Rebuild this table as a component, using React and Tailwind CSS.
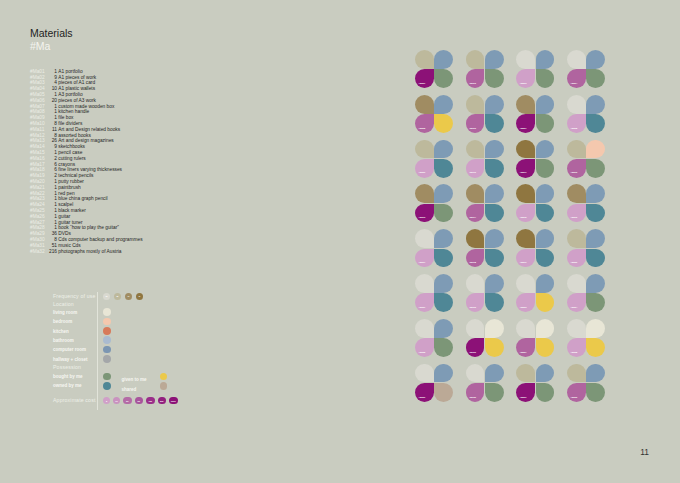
import React from "react";

const C = {
  p: "bg-[#d9d9d0]",
  k: "bg-[#bdb99c]",
  d: "bg-[#a08c62]",
  n: "bg-[#8f7640]",
  b: "bg-[#7e9bb5]",
  h: "bg-[#f4c8ae]",
  w: "bg-[#e8e6d6]",
  M: "bg-[#8c1177]",
  m: "bg-[#b0649f]",
  l: "bg-[#d0a0c8]",
  g: "bg-[#7c9677]",
  t: "bg-[#4f8796]",
  y: "bg-[#ebc94a]",
  u: "bg-[#bba996]",
};

const flowers = [
  "kbMg", "kbmg", "pblg", "pbmg",
  "dbmy", "kbmt", "dbMg", "pblt",
  "kblt", "kblt", "nbMg", "khmg",
  "dbMg", "dbmt", "nblt", "dblt",
  "pblt", "nbmt", "nblt", "kblt",
  "pblt", "pblt", "pbly", "pblg",
  "pblg", "pwMy", "pwmy", "pwly",
  "pbMu", "pbmg", "kbMg", "kbmg",
];

const items = [
  ["1", "A1 portfolio"],
  ["9", "A1 pieces of work"],
  ["4", "pieces of A1 card"],
  ["10", "A1 plastic wallets"],
  ["1", "A3 portfolio"],
  ["20", "pieces of A3 work"],
  ["1", "custom made wooden box"],
  ["1", "kitchen handle"],
  ["1", "file box"],
  ["8", "file dividers"],
  ["11", "Art and Design related books"],
  ["8", "assorted books"],
  ["26", "Art and design magazines"],
  ["9", "sketchbooks"],
  ["1", "pencil case"],
  ["2", "cutting rulers"],
  ["6", "crayons"],
  ["6", "fine liners varying thicknesses"],
  ["2", "technical pencils"],
  ["1", "putty rubber"],
  ["1", "paintbrush"],
  ["1", "red pen"],
  ["1", "blue china graph pencil"],
  ["1", "scalpel"],
  ["1", "black marker"],
  ["1", "guitar"],
  ["1", "guitar tuner"],
  ["1", "book \u201chow to play the guitar\u201d"],
  ["36", "DVDs"],
  ["8", "Cds computer backup and programmes"],
  ["51", "music Cds"],
  ["216", "photographs mostly of Austria"],
];

const id = (i) => `#Ma${String(i + 1).padStart(2, "0")}`;

function Flower({ code, label }) {
  const [tl, tr, bl, br] = code.split("");
  return (
    <div className="grid grid-cols-[18.7px_18.7px] grid-rows-[18.7px_18.7px] gap-[0.6px]">
      <div className={`rounded-full rounded-br-none ${C[tl]}`} />
      <div className={`rounded-full rounded-bl-none ${C[tr]}`} />
      <div className={`rounded-full rounded-tr-none flex items-end pl-[3.5px] pb-[4px] ${C[bl]}`}>
        <span className="text-[2.2px] leading-none font-bold text-white">{label}</span>
      </div>
      <div className={`rounded-full rounded-tl-none ${C[br]}`} />
    </div>
  );
}

function Dot({ color, text, wide }) {
  return (
    <div
      className={`${wide ? "w-[8.5px]" : "w-[7px]"} h-[7px] rounded-full flex items-center justify-center ${color}`}
    >
      {text && <span className="text-[2.2px] leading-none font-bold text-white">{text}</span>}
    </div>
  );
}

const Label = ({ children }) => (
  <span className="text-[4.5px] leading-none font-bold whitespace-nowrap text-[#f7f7f2]">{children}</span>
);
const Head = ({ children }) => (
  <span className="text-[5.2px] leading-none tracking-[0.15px] whitespace-nowrap text-[#eef0e8]">{children}</span>
);

export default function App() {
  const locations = [
    ["living room", "bg-[#e8e6d6]"],
    ["bedroom", "bg-[#f4c8ae]"],
    ["kitchen", "bg-[#d77a5a]"],
    ["bathroom", "bg-[#aabbd0]"],
    ["computer room", "bg-[#7b96b2]"],
    ["hallway + closet", "bg-[#a4a7a9]"],
  ];

  return (
    <div className="w-[680px] h-[483px] bg-[#c9ccc0] flex font-['Liberation_Sans',Arial,sans-serif]">
      {/* left: title, item list, legend */}
      <div className="w-[415px] pl-[30px] pt-[27.3px] flex flex-col">
        <div className="text-[10.5px] leading-[12.5px]">
          <div className="text-[#1e1e1e]">Materials</div>
          <div className="text-[#f4f4ee]">#Ma</div>
        </div>

        <div className="mt-[17px] flex flex-col">
          {items.map(([n, t], i) => (
            <div key={i} className="flex items-center h-[5.8px] text-[4.8px] leading-none whitespace-nowrap">
              <span className="w-[18.5px] text-[#ebece5]">{id(i)}</span>
              <span className="w-[8.5px] text-right text-[#262626]">{n}</span>
              <span className="ml-[1.3px] text-[#262626]">{t}</span>
            </div>
          ))}
        </div>

        {/* legend */}
        <div className="mt-[37px] ml-[23px] flex">
          <div className="w-[44px] flex flex-col">
            <div className="h-[9.5px] flex items-center"><Head>Frequency of use</Head></div>
            <div className="h-[6px] flex items-center"><Head>Location</Head></div>
            {locations.map(([l]) => (
              <div key={l} className="h-[9.4px] flex items-center pt-[2px]"><Label>{l}</Label></div>
            ))}
            <div className="h-[8px] flex items-center"><Head>Possession</Head></div>
            <div className="h-[9.5px] flex items-center pt-[1px]"><Label>bought by me</Label></div>
            <div className="h-[9.5px] flex items-center pt-[1px]"><Label>owned by me</Label></div>
            <div className="h-[16px] flex items-center pt-[4px]"><Head>Approximate cost</Head></div>
          </div>

          <div className="border-l border-[#e2e4da] pl-[5px] pb-[3px] flex flex-col">
            <div className="h-[9.5px] flex items-center gap-[4px]">
              <Dot color="bg-[#d9d9d0]" text="W" />
              <Dot color="bg-[#bdb99c]" text="M" />
              <Dot color="bg-[#a08c62]" text="%" />
              <Dot color="bg-[#8f7640]" text="D" />
            </div>
            <div className="h-[6px]" />
            {locations.map(([l, c]) => (
              <div key={l} className="h-[9.4px] flex items-center">
                <div className={`w-[7.5px] h-[7.5px] rounded-full ${c}`} />
              </div>
            ))}
            <div className="h-[8px]" />
            <div className="h-[9.5px] flex items-center">
              <div className="w-[7.5px] h-[7.5px] rounded-full bg-[#7c9677]" />
              <span className="ml-[11px] w-[38px]"><Label>given to me</Label></span>
              <div className="w-[7.5px] h-[7.5px] rounded-full bg-[#ebc94a]" />
            </div>
            <div className="h-[9.5px] flex items-center">
              <div className="w-[7.5px] h-[7.5px] rounded-full bg-[#4f8796]" />
              <span className="ml-[11px] w-[38px]"><Label>shared</Label></span>
              <div className="w-[7.5px] h-[7.5px] rounded-full bg-[#bba996]" />
            </div>
            <div className="h-[16px] flex items-center pt-[4px] gap-[3px]">
              <Dot color="bg-[#d0a0c8]" text="5" />
              <Dot color="bg-[#c993bf]" text="10" />
              <Dot color="bg-[#b46ba6]" text="20" wide />
              <Dot color="bg-[#a8559c]" text="50" wide />
              <Dot color="bg-[#9a2e89]" text="100" wide />
              <Dot color="bg-[#92207f]" text="500" wide />
              <Dot color="bg-[#8c1177]" text="1000" wide />
            </div>
          </div>
        </div>
      </div>

      {/* right: flower grid and page number */}
      <div className="flex-1 flex flex-col pt-[50px]">
        <div className="grid grid-cols-[repeat(4,38px)] gap-x-[12.67px] gap-y-[6.86px]">
          {flowers.map((f, i) => (
            <Flower key={i} code={f} label={id(i)} />
          ))}
        </div>
        <div className="mt-auto self-end pr-[31px] pb-[27px] text-[8.4px] leading-none text-[#333]">11</div>
      </div>
    </div>
  );
}
